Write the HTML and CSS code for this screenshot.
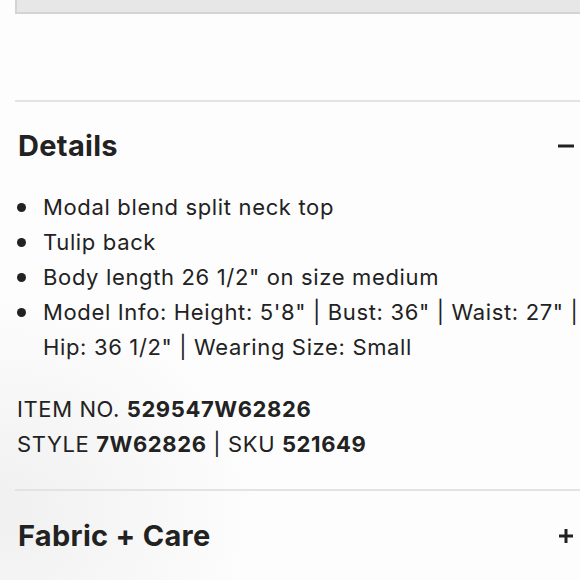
FILE: index.html
```html
<!DOCTYPE html>
<html lang="en">
<head>
<meta charset="utf-8">
<title>Details</title>
<link rel="stylesheet" href="styles.css">
</head>
<body>
<div class="page">
  <div class="topbox"></div>
  <section class="acc">
    <header class="acc-head">
      <h2 class="acc-title">Details</h2>
      <svg class="acc-icon" width="16" height="16" viewBox="0 0 16 16"><path d="M0 8H16" stroke="#222" stroke-width="3"/></svg>
    </header>
    <ul class="bullets">
      <li>Modal blend split neck top</li>
      <li>Tulip back</li>
      <li>Body length 26 1/2" on size medium</li>
      <li><span class="nw">Model Info: Height: 5'8" | Bust: 36" | Waist: 27" |</span> <span class="nw">Hip: 36 1/2" | Wearing Size: Small</span></li>
    </ul>
    <p class="ids">ITEM NO. <b>529547W62826</b><br>STYLE <b>7W62826</b> | SKU <b>521649</b></p>
  </section>
  <section class="acc acc-last">
    <header class="acc-head">
      <h2 class="acc-title">Fabric + Care</h2>
      <svg class="acc-icon" width="16" height="16" viewBox="0 0 16 16"><path d="M1 8H15M8 1V15" stroke="#222" stroke-width="3"/></svg>
    </header>
  </section>
</div>
</body>
</html>
```

FILE: styles.css
```css
html, body {
  margin: 0;
  padding: 0;
}
body {
  width: 580px;
  height: 580px;
  overflow: hidden;
  background: radial-gradient(ellipse 260px 220px at 0% 88%, #f0f0f0 0%, #fdfdfd 100%);
  background-color: #fdfdfd;
  font-family: Inter, "Open Sans", sans-serif;
  color: #222;
}
.page {
  margin-left: 15px;
  width: 565px;
}
.topbox {
  height: 12px;
  background: #e7e7e7;
  border-left: 2px solid #d4d4d4;
  border-bottom: 2px solid #d4d4d4;
  margin-right: -20px;
}
.acc {
  border-top: 2px solid #e3e3e3;
  padding: 0 6px 27px 3px;
}
.topbox + .acc {
  margin-top: 86px;
}
.acc-head {
  display: flex;
  align-items: center;
  justify-content: space-between;
  padding-top: 26px;
  height: 36px;
}
.acc-last .acc-head {
  padding-top: 27px;
}
.acc-title {
  margin: 0;
  font-size: 29px;
  line-height: 36px;
  font-weight: 700;
  letter-spacing: 0.3px;
}
.acc-icon {
  display: block;
}
.bullets {
  list-style: none;
  margin: 26px 0 0 0;
  padding: 0;
  font-size: 22px;
  line-height: 35px;
  letter-spacing: 0.65px;
}
.bullets li {
  position: relative;
  padding-left: 25px;
}
.bullets li::before {
  content: "";
  position: absolute;
  left: -1px;
  top: 13px;
  width: 9px;
  height: 9px;
  border-radius: 50%;
  background: #222;
}
.nw {
  white-space: nowrap;
}
.ids {
  margin: 27px 0 0 -1px;
  font-size: 22px;
  line-height: 35px;
  letter-spacing: 0.6px;
}
.ids b {
  font-weight: 700;
}
```
